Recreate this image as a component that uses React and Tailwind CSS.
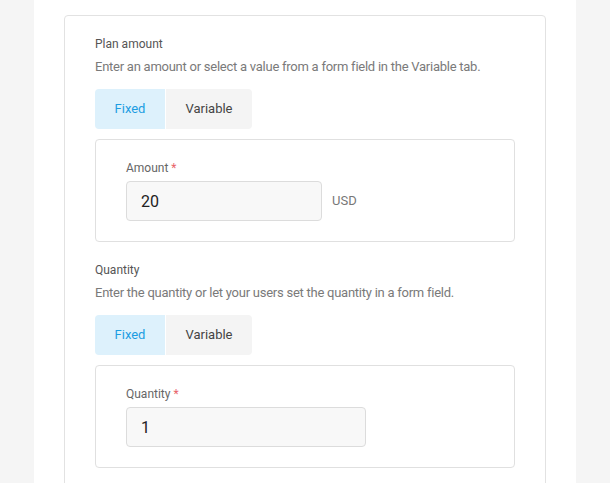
function Tabs() {
  return (
    <div className="mt-3 flex h-10 w-fit gap-px">
      <button
        type="button"
        className="w-[70px] rounded-l bg-[#ddf1fc] text-[13px] text-[#1c9de2]"
      >
        Fixed
      </button>
      <button
        type="button"
        className="w-[86px] rounded-r bg-[#f4f4f4] text-[13px] text-[#444]"
      >
        Variable
      </button>
    </div>
  );
}

function Field({ label, value, width, suffix }) {
  return (
    <div className="mt-2.5 rounded border border-[#e0e0e0] px-[30px] py-5">
      <p className="text-xs leading-4 text-[#666]">
        {label} <span className="text-[#e8646a]">*</span>
      </p>
      <div className="mt-[5px] flex items-center">
        <input
          readOnly
          value={value}
          className={`${width} h-10 rounded border border-[#dcdcdc] bg-[#f8f8f8] px-[14px] text-base text-[#222] outline-none`}
        />
        {suffix ? <span className="ml-2.5 text-[13px] text-[#777]">{suffix}</span> : null}
      </div>
    </div>
  );
}

function Section({ title, description, children, first }) {
  return (
    <section className={first ? '' : 'mt-5'}>
      <h3 className="text-xs leading-4 text-[#555]">{title}</h3>
      <p className="mt-[5px] text-[13px] leading-5 tracking-[-0.25px] text-[#7a7a7a]">{description}</p>
      <Tabs />
      {children}
    </section>
  );
}

export default function App() {
  return (
    <div className="min-h-[483px] bg-[#f5f5f5] font-['Roboto',sans-serif]">
      <div className="mx-[34px] min-h-[483px] bg-white px-[30px] pt-[15px]">
        <div className="rounded border border-[#e2e2e2] px-[30px] pt-5 pb-8">
          <Section
            first
            title="Plan amount"
            description="Enter an amount or select a value from a form field in the Variable tab."
          >
            <Field label="Amount" value="20" width="w-[196px]" suffix="USD" />
          </Section>
          <Section
            title="Quantity"
            description="Enter the quantity or let your users set the quantity in a form field."
          >
            <Field label="Quantity" value="1" width="w-[240px]" />
          </Section>
        </div>
      </div>
    </div>
  );
}
